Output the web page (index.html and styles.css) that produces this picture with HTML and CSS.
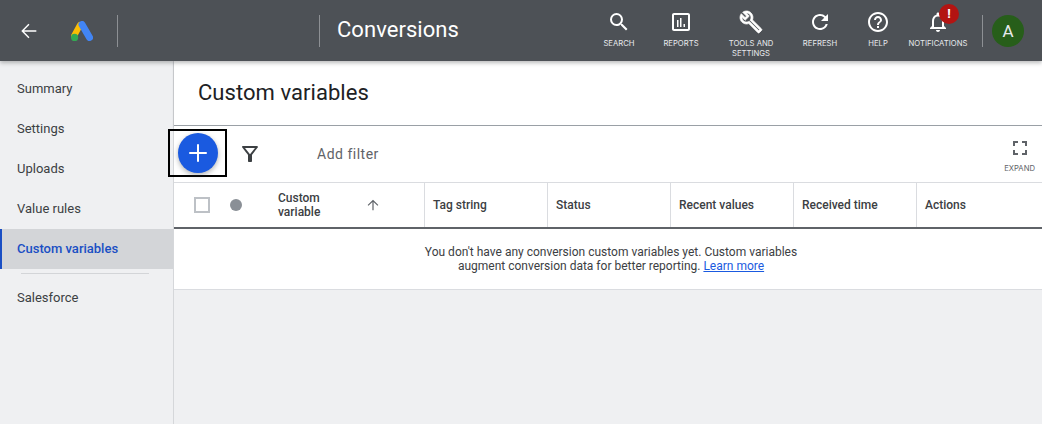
FILE: index.html
```html
<!DOCTYPE html>
<html lang="en">

<head>
    <meta charset="UTF-8">
    <meta name="viewport" content="width=device-width, initial-scale=1.0">
    <title>Conversions</title>
    <link rel="stylesheet" href="styles.css">
</head>

<body>
    <header class="topbar">
        <a class="back-btn" href="#" aria-label="Back">
            <svg width="22" height="22" viewBox="0 0 24 24"><path d="M20 11.200H6.600l5.900-5.900L11.400 4.200 3.600 12l7.800 7.800 1.100-1.100-5.900-5.900H20z"/></svg>
        </a>
        <svg class="logo" width="22" height="20" viewBox="0 0 22 20">
            <path d="M9 4 3 15" stroke="#fbbc04" stroke-width="6" stroke-linecap="round" fill="none"/>
            <path d="M11 3.500 18.500 16.500" stroke="#4285f4" stroke-width="7" stroke-linecap="round" fill="none"/>
            <circle cx="3.600" cy="16.400" r="3.600" fill="#34a853"/>
        </svg>
        <span class="bar-divider first"></span>
        <span class="bar-divider second"></span>
        <div class="page-title">Conversions</div>

        <nav class="actions">
            <a class="action w-search" href="#">
                <svg width="24" height="24" viewBox="0 0 24 24"><path d="M15.500 14h-.79l-.28-.27A6.471 6.471 0 0 0 16 9.500 6.500 6.500 0 1 0 9.500 16c1.610 0 3.090-.59 4.230-1.570l.27.28v.79l5 4.990L20.490 19l-4.990-5zm-6 0C7.010 14 5 11.990 5 9.500S7.010 5 9.500 5 14 7.010 14 9.500 11.990 14 9.500 14z"/></svg>
                <span>SEARCH</span>
            </a>
            <a class="action w-reports" href="#">
                <svg width="24" height="24" viewBox="0 0 24 24"><path d="M19 3H5c-1.100 0-2 .9-2 2v14c0 1.100.9 2 2 2h14c1.100 0 2-.9 2-2V5c0-1.100-.9-2-2-2zm0 16H5V5h14v14zM8 10h1.500v7H8zm3-2h1.500v9H11zm3.500 6H16v3h-1.500z"/></svg>
                <span>REPORTS</span>
            </a>
            <a class="action w-tools" href="#">
                <svg class="wrench" width="24" height="24" viewBox="0 0 24 24"><path d="M22.610 18.990l-9.080-9.080c.93-2.340.45-5.100-1.440-7C9.790.61 6.210.4 3.660 2.260L7.500 6.110 6.080 7.520 2.250 3.690C.39 6.230.6 9.820 2.900 12.110c1.860 1.860 4.570 2.350 6.890 1.480l9.110 9.110c.39.39 1.020.39 1.410 0l2.300-2.300c.4-.38.4-1.010 0-1.410zm-3 1.600l-9.460-9.460c-.61.45-1.290.72-2 .82-1.360.2-2.790-.21-3.830-1.250C3.370 9.760 2.930 8.500 3 7.260l3.090 3.090 4.240-4.240-3.090-3.090c1.240-.07 2.490.37 3.440 1.310 1.080 1.080 1.490 2.570 1.240 3.960-.12.71-.42 1.370-.88 1.960l9.450 9.450-.88.89z"/></svg>
                <span>TOOLS AND SETTINGS</span>
            </a>
            <a class="action w-refresh" href="#">
                <svg width="24" height="24" viewBox="0 0 24 24"><path d="M17.650 6.350A7.958 7.958 0 0 0 12 4c-4.420 0-7.990 3.580-7.990 8s3.570 8 7.990 8c3.730 0 6.840-2.550 7.730-6h-2.080A5.990 5.990 0 0 1 12 18c-3.310 0-6-2.690-6-6s2.690-6 6-6c1.660 0 3.140.69 4.220 1.780L13 11h7V4l-2.350 2.350z"/></svg>
                <span>REFRESH</span>
            </a>
            <a class="action w-help" href="#">
                <svg width="24" height="24" viewBox="0 0 24 24"><path d="M11 18h2v-2h-2v2zm1-16C6.480 2 2 6.480 2 12s4.480 10 10 10 10-4.480 10-10S17.520 2 12 2zm0 18c-4.410 0-8-3.590-8-8s3.590-8 8-8 8 3.590 8 8-3.590 8-8 8zm0-14c-2.210 0-4 1.790-4 4h2c0-1.100.9-2 2-2s2 .9 2 2c0 2-3 1.750-3 5h2c0-2.250 3-2.500 3-5 0-2.210-1.790-4-4-4z"/></svg>
                <span>HELP</span>
            </a>
            <a class="action w-notif" href="#">
                <svg width="24" height="24" viewBox="0 0 24 24"><path d="M12 22c1.100 0 2-.9 2-2h-4c0 1.100.9 2 2 2zm6-6v-5c0-3.070-1.630-5.640-4.500-6.320V4c0-.83-.67-1.500-1.500-1.500s-1.500.67-1.500 1.500v.68C7.640 5.360 6 7.920 6 11v5l-2 2v1h16v-1l-2-2zm-2 1H8v-6c0-2.480 1.510-4.500 4-4.500s4 2.020 4 4.500v6z"/></svg>
                <span>NOTIFICATIONS</span>
                <b class="badge">!</b>
            </a>
        </nav>
        <span class="bar-divider third"></span>
        <div class="avatar">A</div>
    </header>

    <div class="layout">
        <aside class="sidebar">
            <a class="side-item" href="#">Summary</a>
            <a class="side-item" href="#">Settings</a>
            <a class="side-item" href="#">Uploads</a>
            <a class="side-item" href="#">Value rules</a>
            <a class="side-item active" href="#">Custom variables</a>
            <div class="side-divider"></div>
            <a class="side-item" href="#">Salesforce</a>
        </aside>

        <main class="content">
            <h1 class="section-title">Custom variables</h1>

            <div class="toolbar">
                <div class="focus-box">
                    <button class="add-btn" aria-label="Add">
                        <svg width="30" height="30" viewBox="0 0 24 24"><path d="M19 12.800h-6.200V19h-1.600v-6.200H5v-1.600h6.200V5h1.600v6.200H19z"/></svg>
                    </button>
                </div>
                <svg class="filter-icon" width="24" height="24" viewBox="0 0 24 24"><path d="M7 6h10l-5.010 6.300L7 6zm-2.750-.39C6.270 8.200 10 13 10 13v6c0 .55.45 1 1 1h2c.55 0 1-.45 1-1v-6s3.720-4.800 5.740-7.390A.998.998 0 0 0 18.950 4H5.040c-.83 0-1.300.95-.79 1.610z"/></svg>
                <span class="add-filter">Add filter</span>
                <div class="expand">
                    <svg width="24" height="24" viewBox="0 0 24 24"><path d="M7 14H5v5h5v-2H7v-3zm-2-4h2V7h3V5H5v5zm12 7h-3v2h5v-5h-2v3zM14 5v2h3v3h2V5h-5z"/></svg>
                    <span>EXPAND</span>
                </div>
            </div>

            <div class="table-head">
                <div class="cell first-cell">
                    <span class="checkbox"></span>
                    <span class="status-dot"></span>
                    <span class="sort-label">Custom variable</span>
                    <svg class="sort-arrow" width="16" height="16" viewBox="0 0 24 24"><path d="M4 12l1.200 1.200L11.100 7.400V20h1.800V7.400l5.900 5.800L20 12l-8-8z"/></svg>
                </div>
                <div class="cell">Tag string</div>
                <div class="cell">Status</div>
                <div class="cell">Recent values</div>
                <div class="cell">Received time</div>
                <div class="cell">Actions</div>
            </div>

            <div class="empty-row">
                <p>You don't have any conversion custom variables yet. Custom variables<br>augment conversion data for better reporting. <a href="#">Learn more</a></p>
            </div>
        </main>
    </div>
</body>

</html>
```

FILE: styles.css
```css
* {
    box-sizing: border-box;
}

html,
body {
    margin: 0;
    height: 100%;
    overflow: hidden;
}

body {
    font-family: Roboto, "Liberation Sans", sans-serif;
    background-color: #eff0f2;
    color: #3c4043;
}

a {
    text-decoration: none;
}

/* top bar */
.topbar {
    position: relative;
    z-index: 2;
    display: flex;
    align-items: center;
    height: 61px;
    background-color: #4d5156;
    box-shadow: 0 2px 4px rgba(60, 64, 67, 0.35);
}

.topbar svg {
    fill: #fff;
}

.topbar .wrench {
    stroke: #fff;
    stroke-width: 0.7;
}

.back-btn {
    display: flex;
    margin-left: 18px;
}

.logo {
    margin-left: 31px;
}

.bar-divider {
    width: 1px;
    height: 32px;
    background-color: #8d9094;
}

.bar-divider.first {
    margin-left: 24px;
}

.bar-divider.second {
    margin-left: 201px;
}

.bar-divider.third {
    margin-left: 11px;
}

.page-title {
    margin-left: 17px;
    margin-bottom: 2px;
    font-size: 22px;
    letter-spacing: 0.05px;
    color: #fff;
}

.actions {
    display: flex;
    align-self: stretch;
    margin-left: auto;
}

.action {
    position: relative;
    display: flex;
    flex-direction: column;
    align-items: center;
    padding-top: 10px;
    color: #e8eaed;
    font-family: Inter, sans-serif;
    font-size: 7.7px;
    line-height: 10px;
    text-align: center;
}

.action span {
    margin-top: 5px;
}

.w-search { width: 60px; }
.w-reports { width: 64px; }
.w-tools { width: 76px; }
.w-refresh { width: 62px; }
.w-help { width: 54px; }
.w-notif { width: 66px; }

.w-tools span {
    width: 56px;
}

.badge {
    position: absolute;
    top: 4px;
    left: 34px;
    width: 20px;
    height: 20px;
    border-radius: 50%;
    background-color: #b31412;
    color: #fff;
    font-family: Roboto, sans-serif;
    font-size: 13px;
    line-height: 20px;
}

.avatar {
    width: 32px;
    height: 32px;
    margin-left: 9px;
    margin-right: 18px;
    border-radius: 50%;
    background-color: #275e1a;
    color: #e8eaed;
    font-size: 17px;
    line-height: 32px;
    text-align: center;
}

/* page */
.layout {
    display: flex;
    height: 363px;
}

.sidebar {
    flex: 0 0 174px;
    padding-top: 8px;
    background-color: #eff0f2;
    border-right: 1px solid #d5d7da;
}

.side-item {
    display: block;
    height: 40px;
    padding-left: 17px;
    color: #3c4043;
    font-size: 13px;
    line-height: 40px;
}

.side-item.active {
    padding-left: 15px;
    border-left: 2px solid #1a4fc4;
    background-color: #d3d5d8;
    color: #1a4fc4;
    font-weight: 500;
}

.side-divider {
    height: 1px;
    margin: 4px 24px 4px 21px;
    background-color: #d3d5d8;
}

.content {
    flex: 1;
    min-width: 0;
}

.section-title {
    height: 65px;
    margin: 0;
    padding-left: 24px;
    background-color: #fff;
    border-bottom: 1px solid #9aa0a6;
    box-shadow: 0 1px 2px rgba(60, 64, 67, 0.3);
    color: #202124;
    font-size: 22px;
    font-weight: 400;
    line-height: 64px;
    letter-spacing: 0.05px;
}

.toolbar {
    display: flex;
    align-items: center;
    height: 57px;
    background-color: #fff;
    border-bottom: 1px solid #dadce0;
}

.focus-box {
    display: flex;
    align-items: center;
    justify-content: center;
    width: 59px;
    height: 48px;
    margin-left: -6px;
    margin-top: -3px;
    border: 2px solid #000;
}

.add-btn {
    display: flex;
    align-items: center;
    justify-content: center;
    width: 40px;
    height: 40px;
    padding: 0;
    border: none;
    border-radius: 50%;
    background-color: #1a5ae0;
    box-shadow: 0 2px 5px rgba(60, 64, 67, 0.4);
}

.add-btn svg {
    fill: #fff;
}

.filter-icon {
    margin-left: 11px;
    fill: #3c4043;
}

.add-filter {
    margin-left: 55px;
    color: #5f6368;
    font-size: 14px;
    letter-spacing: 0.5px;
}

.expand {
    display: flex;
    flex-direction: column;
    align-items: center;
    margin-left: auto;
    margin-right: 7px;
    color: #5f6368;
    font-family: Inter, sans-serif;
    font-size: 7.7px;
}

.expand svg {
    fill: #5f6368;
}

.expand span {
    margin-top: 4px;
}

.table-head {
    display: grid;
    grid-template-columns: 251px repeat(5, 123px);
    height: 46px;
    background-color: #fff;
    border-bottom: 2px solid #5f6368;
}

.cell {
    display: flex;
    align-items: center;
    padding-left: 8px;
    border-right: 1px solid #dadce0;
    color: #3c4043;
    font-size: 12px;
    font-weight: 500;
}

.cell:last-child {
    border-right: none;
}

.first-cell {
    padding-left: 20px;
}

.checkbox {
    width: 16px;
    height: 16px;
    border: 2px solid #bdc1c6;
}

.status-dot {
    width: 12px;
    height: 12px;
    margin-left: 20px;
    border-radius: 50%;
    background-color: #8a8f96;
}

.sort-label {
    width: 60px;
    margin-left: 36px;
    line-height: 14px;
}

.sort-arrow {
    margin-left: 27px;
    fill: #5f6368;
}

.empty-row {
    height: 61px;
    padding-left: 6px;
    background-color: #fff;
    border-bottom: 1px solid #dadce0;
    text-align: center;
}

.empty-row p {
    margin: 0;
    padding-top: 16px;
    color: #3c4043;
    font-size: 12px;
    line-height: 14px;
}

.empty-row a {
    color: #1a5ae0;
    text-decoration: underline;
}
```
